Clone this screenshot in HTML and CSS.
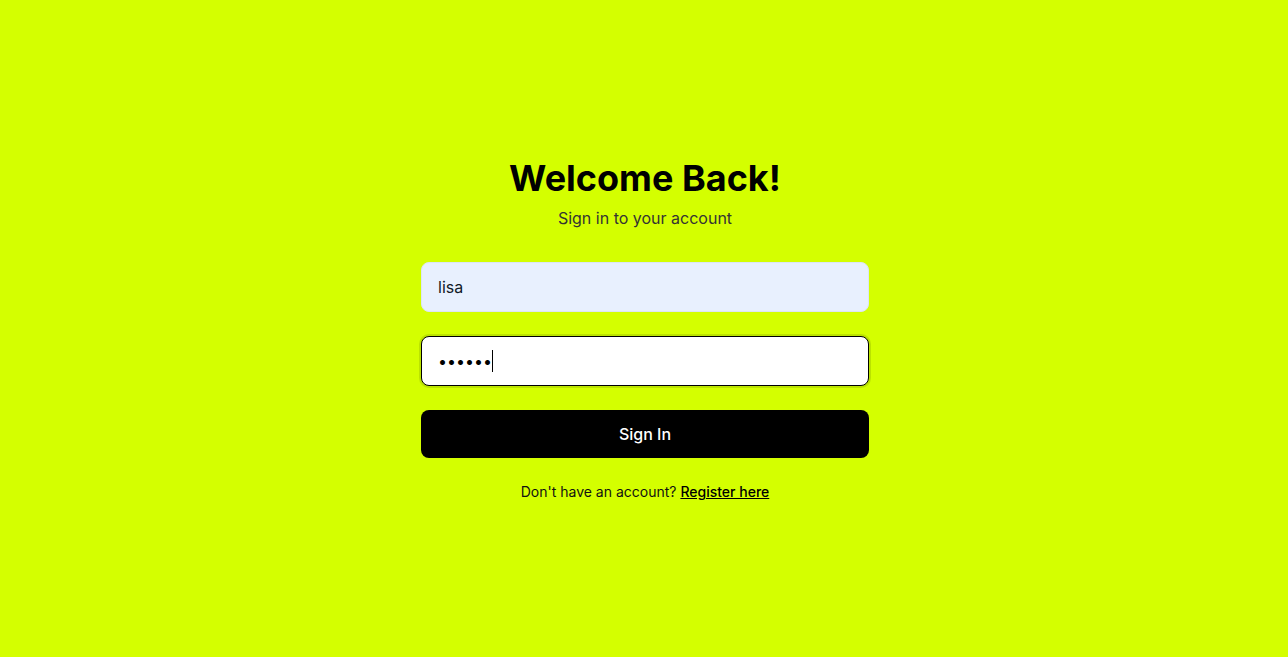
FILE: index.html
```html
<!DOCTYPE html>
<html lang="en">
<head>
<meta charset="utf-8">
<title>Sign In</title>
<link rel="stylesheet" href="styles.css">
</head>
<body>
<main class="page">
  <form class="card" onsubmit="return false">
    <h1 class="title">Welcome Back!</h1>
    <p class="subtitle">Sign in to your account</p>
    <div class="fields">
      <input class="field field-filled" type="text" value="lisa">
      <div class="field-wrap">
        <input class="field field-focus" type="password" value="123456">
        <span class="caret"></span>
      </div>
      <button class="btn" type="submit">Sign In</button>
    </div>
    <p class="footer">Don't have an account? <a class="link" href="#">Register here</a></p>
  </form>
</main>
</body>
</html>
```
FILE: styles.css
```css
* { box-sizing: border-box; }
html, body { margin: 0; padding: 0; }
body {
  background: #d4ff00;
  font-family: Inter, "Noto Sans", sans-serif;
  color: #000;
}
.page {
  min-height: 657px;
  display: flex;
  align-items: center;
  justify-content: center;
  padding-top: 3px;
  padding-left: 2px;
}
.card {
  width: 448px;
  display: flex;
  flex-direction: column;
  align-items: stretch;
}
.title {
  margin: 0;
  font-size: 36px;
  line-height: 40px;
  font-weight: 700;
  text-align: center;
}
.subtitle {
  margin: 8px 0 0;
  font-size: 16px;
  line-height: 24px;
  color: #333;
  text-align: center;
}
.fields {
  margin-top: 32px;
  display: flex;
  flex-direction: column;
  gap: 24px;
}
.field-wrap {
  display: flex;
  position: relative;
}
.field {
  width: 100%;
  height: 50px;
  padding: 12px 16px;
  font-family: inherit;
  font-size: 16px;
  line-height: 24px;
  color: #000;
  border-radius: 8px;
  outline: none;
}
.field-filled {
  background: #e8f0fe;
  border: 1px solid #dce6f5;
  color: #111827;
}
.field-focus {
  background: #fff;
  border: 1px solid #000;
  box-shadow: 0 0 0 2px rgba(80, 100, 0, 0.18);
  caret-color: transparent;
}
.caret {
  position: absolute;
  left: 71px;
  top: 14px;
  width: 1px;
  height: 22px;
  background: #000;
}
.btn {
  height: 48px;
  background: #000;
  color: #fff;
  border: none;
  border-radius: 8px;
  font-family: inherit;
  font-size: 16px;
  font-weight: 500;
  cursor: pointer;
}
.footer {
  margin: 24px 0 0;
  font-size: 14px;
  line-height: 20px;
  text-align: center;
  color: #111;
}
.link {
  color: #000;
  font-weight: 500;
  text-decoration: underline;
}
```
